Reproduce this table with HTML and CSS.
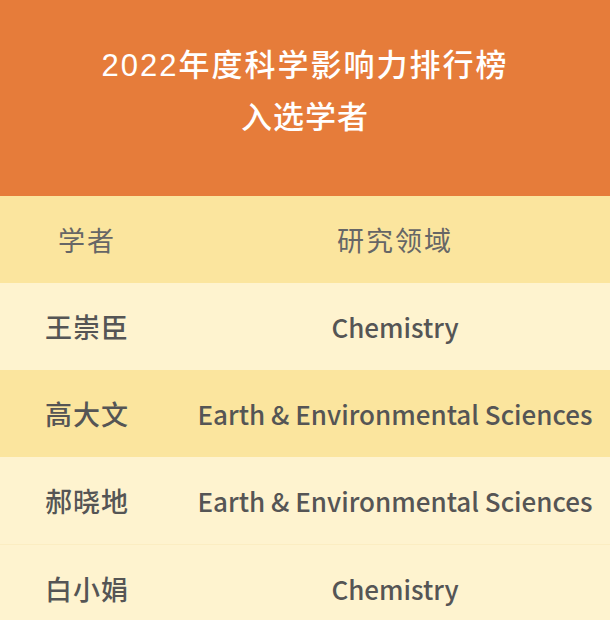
FILE: index.html
```html
<!DOCTYPE html>
<html lang="zh-CN">
<head>
<meta charset="utf-8">
<link rel="stylesheet" href="styles.css">
</head>
<body>
<div class="page">
  <header class="banner">
    <div class="title-line main">2022年度科学影响力排行榜</div>
    <div class="title-line">入选学者</div>
  </header>
  <div class="table">
    <div class="row head">
      <div class="cell name">学者</div>
      <div class="cell field">研究领域</div>
    </div>
    <div class="row light">
      <div class="cell name">王崇臣</div>
      <div class="cell field">Chemistry</div>
    </div>
    <div class="row dark">
      <div class="cell name">高大文</div>
      <div class="cell field">Earth &amp; Environmental Sciences</div>
    </div>
    <div class="row light">
      <div class="cell name">郝晓地</div>
      <div class="cell field">Earth &amp; Environmental Sciences</div>
    </div>
    <div class="row light">
      <div class="cell name">白小娟</div>
      <div class="cell field">Chemistry</div>
    </div>
  </div>
</div>
</body>
</html>
```
FILE: styles.css
```css
html, body {
  margin: 0;
  padding: 0;
}
body {
  width: 610px;
  height: 620px;
  overflow: hidden;
  background: #fef3cf;
  font-family: "Noto Sans CJK SC", "Noto Sans", sans-serif;
}
.page {
  display: flex;
  flex-direction: column;
}
.banner {
  height: 196px;
  background: #e67c3a;
  color: #fff;
  display: flex;
  flex-direction: column;
  align-items: center;
  padding-top: 40px;
  box-sizing: border-box;
  font-family: "Liberation Sans", "Noto Sans CJK SC", sans-serif;
}
.title-line {
  font-size: 31px;
  font-weight: 500;
  line-height: 52px;
  letter-spacing: 1px;
}
.title-line.main {
  letter-spacing: 2px;
}
.table {
  display: flex;
  flex-direction: column;
}
.row {
  display: grid;
  grid-template-columns: 174px 1fr;
  height: 87px;
  box-sizing: border-box;
  align-items: center;
  color: #555;
}
.row.head {
  background: #fbe59e;
  color: #666;
}
.row.dark {
  background: #fbe59e;
}
.row.light {
  background: #fef3cf;
}
.row.light + .row.light {
  border-top: 1px solid #fbedc2;
}
.cell {
  text-align: center;
  font-size: 26px;
}
.cell.name {
  font-size: 27px;
  letter-spacing: 1px;
}
.cell.field {
  padding-left: 6px;
}
.row.head .cell {
  font-size: 27px;
  font-weight: 400;
  letter-spacing: 2px;
}
.row:not(.head) .cell {
  font-weight: 500;
}
```
